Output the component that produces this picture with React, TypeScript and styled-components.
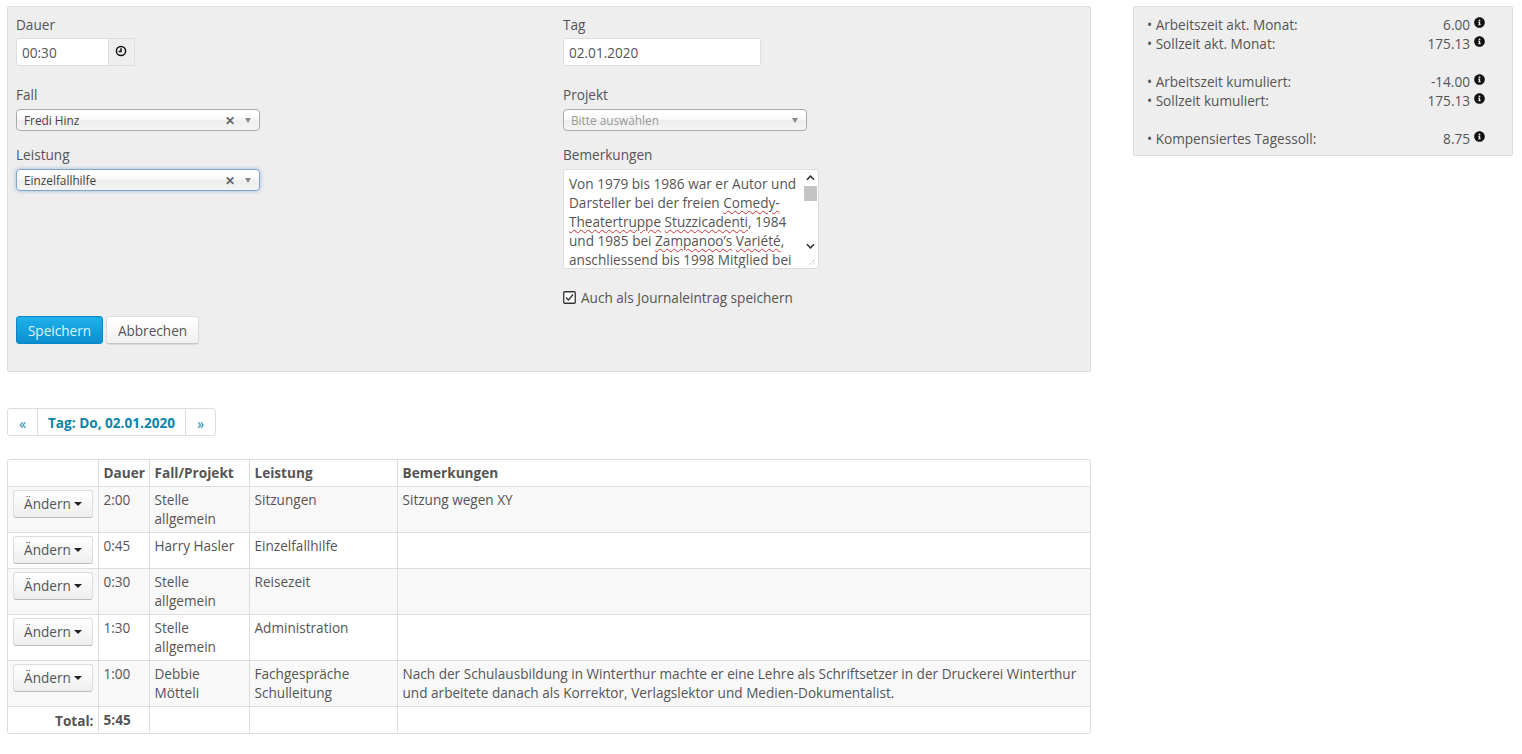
import React from "react";
import styled, { createGlobalStyle } from "styled-components";
import { FaInfoCircle } from "react-icons/fa";

const GlobalStyle = createGlobalStyle`
  html, body {
    margin: 0;
    padding: 0;
    background: #fff;
    color: #555;
    font-family: "Open Sans", sans-serif;
    font-size: 13.6px;
    line-height: 19px;
  }
`;

const rows = [
  { dauer: "2:00", fall: "Stelle allgemein", leistung: "Sitzungen", text: "Sitzung wegen XY", height: 46 },
  { dauer: "0:45", fall: "Harry Hasler", leistung: "Einzelfallhilfe", text: "", height: 36 },
  { dauer: "0:30", fall: "Stelle allgemein", leistung: "Reisezeit", text: "", height: 46 },
  { dauer: "1:30", fall: "Stelle allgemein", leistung: "Administration", text: "", height: 46 },
  {
    dauer: "1:00",
    fall: "Debbie Mötteli",
    leistung: "Fachgespräche Schulleitung",
    text: "Nach der Schulausbildung in Winterthur machte er eine Lehre als Schriftsetzer in der Druckerei Winterthur und arbeitete danach als Korrektor, Verlagslektor und Medien-Dokumentalist.",
    height: 46
  }
];

const stats = [
  [
    { label: "Arbeitszeit akt. Monat:", value: "6.00" },
    { label: "Sollzeit akt. Monat:", value: "175.13" }
  ],
  [
    { label: "Arbeitszeit kumuliert:", value: "-14.00" },
    { label: "Sollzeit kumuliert:", value: "175.13" }
  ],
  [{ label: "Kompensiertes Tagessoll:", value: "8.75" }]
];

const Select = ({ value, placeholder, focused, width }: { value: string; placeholder?: boolean; focused?: boolean; width: number }) => (
  <SelectBox $focused={focused} $width={width}>
    <SelectValue $placeholder={placeholder}>{value}</SelectValue>
    {!placeholder && <SelectClear>✕</SelectClear>}
    <SelectArrow />
  </SelectBox>
);

const App = () => {
  return (
    <Page>
      <GlobalStyle />
      <MainColumn>
        <FormPanel>
          <FormGrid>
            <FormColumn>
              <TopGroup>
                <TopLabel>Dauer</TopLabel>
                <InputGroup>
                  <TimeInput>00:30</TimeInput>
                  <InputAddon>
                    <ClockIcon viewBox="0 0 12 12">
                      <circle cx="6" cy="6" r="4.6" />
                      <path d="M6 3.2V6.4H3.6" />
                    </ClockIcon>
                  </InputAddon>
                </InputGroup>
              </TopGroup>
              <SelectGroup>
                <Label>Fall</Label>
                <Select value="Fredi Hinz" width={244} />
              </SelectGroup>
              <SelectGroup>
                <Label>Leistung</Label>
                <Select value="Einzelfallhilfe" width={244} focused />
              </SelectGroup>
            </FormColumn>
            <FormColumn>
              <TopGroup>
                <TopLabel>Tag</TopLabel>
                <DateInput>02.01.2020</DateInput>
              </TopGroup>
              <SelectGroup>
                <Label>Projekt</Label>
                <Select value="Bitte auswählen" width={244} placeholder />
              </SelectGroup>
              <div>
                <Label>Bemerkungen</Label>
                <TextArea>
                  <TextAreaText>
                    Von 1979 bis 1986 war er Autor und Darsteller bei der freien <Typo>Comedy-</Typo>{" "}
                    <Typo>Theatertruppe</Typo> <Typo>Stuzzicadenti</Typo>, 1984 und 1985 bei{" "}
                    <Typo>Zampanoo’s</Typo> <Typo>Variété</Typo>, anschliessend bis 1998 Mitglied bei
                  </TextAreaText>
                  <ScrollTrack>
                    <ScrollArrow viewBox="0 0 10 6">
                      <path d="M1 5l4-4 4 4" />
                    </ScrollArrow>
                    <ScrollThumb />
                    <ScrollSpacer />
                    <ScrollArrow viewBox="0 0 10 6">
                      <path d="M1 1l4 4 4-4" />
                    </ScrollArrow>
                  </ScrollTrack>
                  <ResizeGrip viewBox="0 0 10 10">
                    <path d="M9 1L1 9M9 5L5 9" />
                  </ResizeGrip>
                </TextArea>
              </div>
              <CheckRow>
                <CheckBox viewBox="0 0 13 13">
                  <rect x="0.75" y="0.75" width="11.5" height="11.5" rx="1" />
                  <path d="M3 6.5l2.5 2.5L10 3.5" />
                </CheckBox>
                Auch als Journaleintrag speichern
              </CheckRow>
            </FormColumn>
          </FormGrid>
          <ButtonRow>
            <PrimaryButton>Speichern</PrimaryButton>
            <DefaultButton>Abbrechen</DefaultButton>
          </ButtonRow>
        </FormPanel>

        <Pager>
          <PagerItem>«</PagerItem>
          <PagerCurrent>Tag: Do, 02.01.2020</PagerCurrent>
          <PagerItem>»</PagerItem>
        </Pager>

        <TableWrap>
          <Table>
            <colgroup>
              <col style={{ width: 90 }} />
              <col style={{ width: 51 }} />
              <col style={{ width: 100 }} />
              <col style={{ width: 148 }} />
              <col />
            </colgroup>
            <thead>
              <HeadRow>
                <HeadCell />
                <HeadCell>Dauer</HeadCell>
                <HeadCell>Fall/Projekt</HeadCell>
                <HeadCell>Leistung</HeadCell>
                <HeadCell>Bemerkungen</HeadCell>
              </HeadRow>
            </thead>
            <tbody>
              {rows.map((row, i) => (
                <BodyRow key={i} $odd={i % 2 === 0} $height={row.height}>
                  <ButtonCell>
                    <ChangeButton>
                      Ändern
                      <Caret />
                    </ChangeButton>
                  </ButtonCell>
                  <Cell>{row.dauer}</Cell>
                  <Cell>{row.fall}</Cell>
                  <Cell>{row.leistung}</Cell>
                  <Cell>{row.text}</Cell>
                </BodyRow>
              ))}
              <TotalRow>
                <TotalLabel>Total:</TotalLabel>
                <TotalValue>5:45</TotalValue>
                <Cell />
                <Cell />
                <Cell />
              </TotalRow>
            </tbody>
          </Table>
        </TableWrap>
      </MainColumn>

      <SidePanel>
        {stats.map((group, i) => (
          <StatGroup key={i}>
            {group.map((stat) => (
              <StatRow key={stat.label}>
                <StatLabel>• {stat.label}</StatLabel>
                <span>{stat.value}</span>
                <InfoIcon>
                  <FaInfoCircle size={11} color="#111" />
                </InfoIcon>
              </StatRow>
            ))}
          </StatGroup>
        ))}
      </SidePanel>
    </Page>
  );
};

const Page = styled.div`
  display: flex;
  align-items: flex-start;
  gap: 42px;
  width: 1522px;
  height: 754px;
  box-sizing: border-box;
  padding: 6px 0 0 7px;
  overflow: hidden;
`;

const MainColumn = styled.div`
  width: 1084px;
  flex: none;
`;

const FormPanel = styled.div`
  box-sizing: border-box;
  height: 366px;
  padding: 8px 8px;
  background: #eee;
  border: 1px solid #ddd;
  border-radius: 2px;
`;

const FormGrid = styled.div`
  display: grid;
  grid-template-columns: 547px 1fr;
  height: 301px;
`;

const FormColumn = styled.div`
  display: flex;
  flex-direction: column;
`;

const Label = styled.div`
  height: 19px;
  line-height: 19px;
  margin-bottom: 5px;
`;

const TopLabel = styled(Label)`
  margin-bottom: 4px;
`;

const TopGroup = styled.div`
  height: 70px;
`;

const SelectGroup = styled.div`
  height: 60px;
`;

const InputGroup = styled.div`
  display: flex;
  width: 119px;
  height: 28px;
`;

const TimeInput = styled.div`
  flex: 1;
  box-sizing: border-box;
  padding: 0 5px;
  line-height: 28px;
  background: #fff;
  border: 1px solid #ddd;
  border-radius: 3px 0 0 3px;
`;

const InputAddon = styled.div`
  display: flex;
  justify-content: center;
  padding: 6px 2px 0 0;
  box-sizing: border-box;
  width: 26px;
  background: #eee;
  border: 1px solid #ddd;
  border-left: 0;
  border-radius: 0 3px 3px 0;
`;

const ClockIcon = styled.svg`
  width: 12px;
  height: 12px;
  fill: none;
  stroke: #111;
  stroke-width: 1.5;
`;

const DateInput = styled.div`
  box-sizing: border-box;
  width: 198px;
  height: 28px;
  padding: 0 5px;
  line-height: 28px;
  background: #fff;
  border: 1px solid #ddd;
  border-radius: 3px;
`;

const SelectBox = styled.div<{ $focused?: boolean; $width: number }>`
  display: flex;
  align-items: center;
  box-sizing: border-box;
  width: ${(p) => p.$width}px;
  height: 22px;
  padding: 0 8px 0 7px;
  background: linear-gradient(#fff 20%, #f6f6f6 50%, #eee 52%, #f4f4f4);
  border: 1px solid ${(p) => (p.$focused ? "#7ea6c9" : "#aaa")};
  border-radius: 4px;
  box-shadow: ${(p) => (p.$focused ? "0 0 4px rgba(60, 120, 180, 0.45)" : "0 0 2px #fff inset")};
  font-size: 11.8px;
`;

const SelectValue = styled.span<{ $placeholder?: boolean }>`
  flex: 1;
  color: ${(p) => (p.$placeholder ? "#999" : "#444")};
`;

const SelectClear = styled.span`
  margin-right: 10px;
  font-size: 12px;
  font-weight: 700;
  color: #666;
`;

const SelectArrow = styled.span`
  width: 0;
  height: 0;
  border-left: 3px solid transparent;
  border-right: 3px solid transparent;
  border-top: 5px solid #888;
`;

const TextArea = styled.div`
  position: relative;
  display: flex;
  box-sizing: border-box;
  width: 256px;
  height: 100px;
  background: #fff;
  border: 1px solid #ddd;
  border-radius: 3px;
  overflow: hidden;
`;

const TextAreaText = styled.div`
  flex: 1;
  padding: 4px 0 0 5px;
  line-height: 19px;
`;

const Typo = styled.span`
  text-decoration: underline wavy #c33;
  text-decoration-thickness: 1px;
  text-underline-offset: 2px;
`;

const ScrollTrack = styled.div`
  display: flex;
  flex-direction: column;
  align-items: center;
  flex: none;
  width: 15px;
  height: 79px;
  box-sizing: border-box;
  padding-top: 5px;
`;

const ScrollArrow = styled.svg`
  flex: none;
  width: 9px;
  height: 6px;
  fill: none;
  stroke: #333;
  stroke-width: 1.7;
`;

const ScrollThumb = styled.div`
  flex: none;
  width: 13px;
  height: 15px;
  margin-top: 5px;
  background: #c4c4c4;
`;

const ScrollSpacer = styled.div`
  flex: 1;
`;

const ResizeGrip = styled.svg`
  position: absolute;
  right: 2px;
  bottom: 2px;
  width: 8px;
  height: 8px;
  fill: none;
  stroke: #999;
  stroke-width: 1;
  stroke-dasharray: 1.2 1;
`;

const CheckRow = styled.div`
  display: flex;
  align-items: center;
  gap: 5px;
  margin-top: 19px;
  height: 19px;
`;

const CheckBox = styled.svg`
  width: 13px;
  height: 13px;
  flex: none;
  fill: #fff;
  stroke: #333;
  stroke-width: 1.3;
  path {
    fill: none;
  }
`;

const ButtonRow = styled.div`
  display: flex;
  gap: 3px;
`;

const PrimaryButton = styled.div`
  box-sizing: border-box;
  width: 87px;
  height: 28px;
  line-height: 28px;
  text-align: center;
  color: #def4ff;
  background: linear-gradient(#1fb0ea, #0a8fd0);
  border: 1px solid #0b86c2;
  border-radius: 3px;
`;

const DefaultButton = styled.div`
  box-sizing: border-box;
  width: 93px;
  height: 28px;
  line-height: 28px;
  text-align: center;
  background: linear-gradient(#fff, #f1f1f1);
  border: 1px solid #ddd;
  border-bottom-color: #c4c4c4;
  border-radius: 3px;
  box-shadow: 0 1px 1px rgba(0, 0, 0, 0.08);
`;

const Pager = styled.div`
  display: inline-flex;
  height: 28px;
  margin-top: 36px;
  box-sizing: border-box;
  border: 1px solid #ddd;
  border-radius: 3px;
  color: #0a86ab;
  line-height: 28px;
`;

const PagerItem = styled.div`
  width: 29px;
  text-align: center;
  line-height: 29px;
`;

const PagerCurrent = styled.div`
  box-sizing: border-box;
  width: 149px;
  text-align: center;
  font-weight: 700;
  line-height: 27px;
  border-left: 1px solid #ddd;
  border-right: 1px solid #ddd;
`;

const TableWrap = styled.div`
  margin-top: 23px;
  border: 1px solid #ddd;
  border-radius: 3px;
  overflow: hidden;
`;

const Table = styled.table`
  width: 100%;
  table-layout: fixed;
  border-collapse: collapse;
`;

const HeadRow = styled.tr`
  height: 26px;
`;

const HeadCell = styled.th`
  padding: 3px 5px;
  text-align: left;
  font-weight: 700;
  border-left: 1px solid #ddd;
  &:first-child {
    border-left: 0;
  }
`;

const BodyRow = styled.tr<{ $odd: boolean; $height: number }>`
  height: ${(p) => p.$height}px;
  background: ${(p) => (p.$odd ? "#f8f8f8" : "#fff")};
`;

const Cell = styled.td`
  padding: 3px 5px 2px;
  vertical-align: top;
  border-left: 1px solid #ddd;
  border-top: 1px solid #ddd;
`;

const ButtonCell = styled.td`
  padding: 3px 5px 2px;
  vertical-align: top;
  border-top: 1px solid #ddd;
`;

const ChangeButton = styled.div`
  display: flex;
  align-items: center;
  justify-content: center;
  gap: 3px;
  box-sizing: border-box;
  width: 80px;
  height: 28px;
  background: linear-gradient(#fff, #eee);
  border: 1px solid #ddd;
  border-bottom-color: #bbb;
  border-radius: 3px;
`;

const Caret = styled.span`
  width: 0;
  height: 0;
  border-left: 4px solid transparent;
  border-right: 4px solid transparent;
  border-top: 4px solid #222;
`;

const TotalRow = styled.tr`
  height: 27px;
  background: #fff;
`;

const TotalLabel = styled.td`
  padding: 3px 4px 2px 5px;
  text-align: right;
  font-weight: 700;
  border-top: 1px solid #ddd;
`;

const TotalValue = styled(Cell)`
  font-weight: 700;
`;

const SidePanel = styled.div`
  box-sizing: border-box;
  width: 380px;
  height: 150px;
  flex: none;
  padding: 8px 27px 0 13px;
  background: #eee;
  border: 1px solid #ddd;
  border-radius: 2px;
`;

const StatGroup = styled.div`
  margin-bottom: 19px;
`;

const StatRow = styled.div`
  display: flex;
  height: 19px;
  line-height: 19px;
`;

const StatLabel = styled.span`
  flex: 1;
`;

const InfoIcon = styled.span`
  display: flex;
  align-items: flex-start;
  margin-left: 4px;
  padding-top: 2px;
`;

export default App;
